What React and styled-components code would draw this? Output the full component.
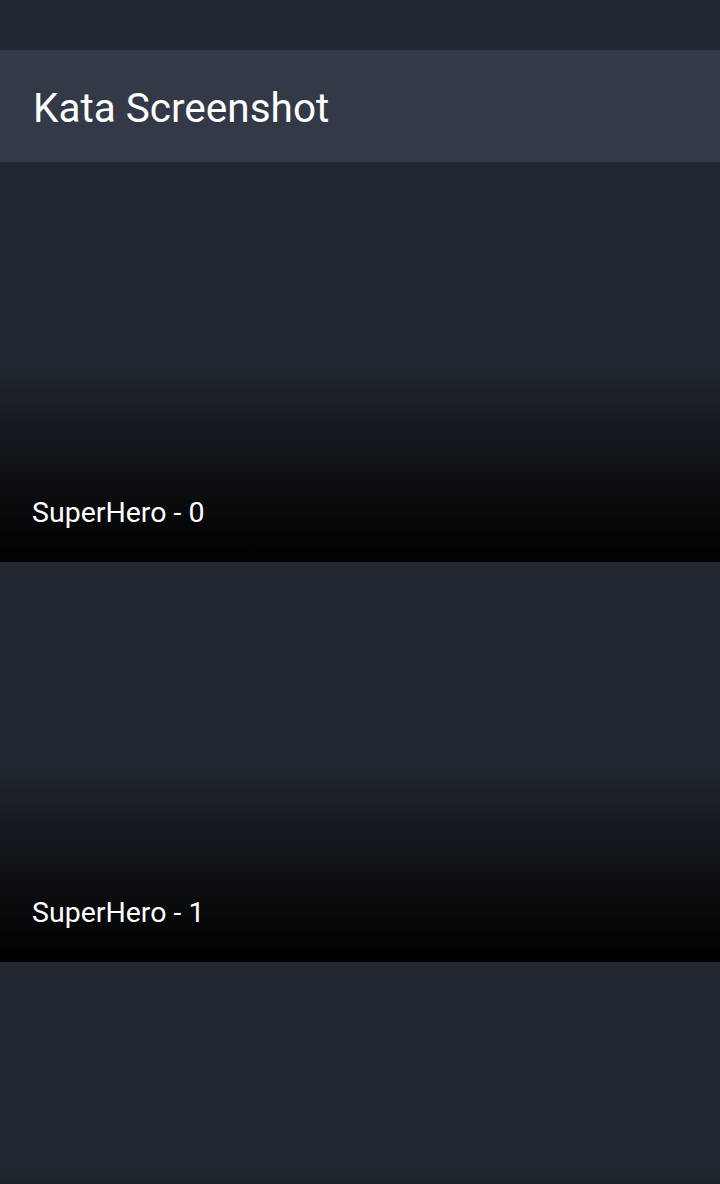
import React from "react";
import styled, { createGlobalStyle } from "styled-components";

const GlobalStyle = createGlobalStyle`
  html, body {
    margin: 0;
    padding: 0;
    background: #222831;
    font-family: Roboto, "Noto Sans", sans-serif;
    overflow: hidden;
  }
`;

const Screen = styled.div`
  width: 720px;
  height: 1184px;
  display: flex;
  flex-direction: column;
  background: #222831;
  overflow: hidden;
`;

const StatusBar = styled.div`
  height: 50px;
  flex-shrink: 0;
  background: #222831;
`;

const Toolbar = styled.div`
  height: 112px;
  flex-shrink: 0;
  display: flex;
  align-items: center;
  padding: 3px 33px 0;
  box-sizing: border-box;
  background: #333946;
`;

const Title = styled.h1`
  margin: 0;
  font-size: 40.5px;
  font-weight: 400;
  color: #ffffff;
`;

const List = styled.div`
  display: flex;
  flex-direction: column;
`;

const HeroRow = styled.div`
  height: 400px;
  flex-shrink: 0;
  display: flex;
  align-items: flex-end;
  padding: 0 32px 33px;
  box-sizing: border-box;
  background: linear-gradient(
      to bottom,
      rgba(0, 0, 0, 0) 50%,
      rgba(0, 0, 0, 0.45) 70%,
      rgba(0, 0, 0, 1) 100%
    ),
    #222831;
`;

const HeroName = styled.span`
  font-size: 28.5px;
  color: #ffffff;
`;

const heroes = ["SuperHero - 0", "SuperHero - 1", "SuperHero - 2"];

const App = () => {
  return (
    <Screen>
      <GlobalStyle />
      <StatusBar />
      <Toolbar>
        <Title>Kata Screenshot</Title>
      </Toolbar>
      <List>
        {heroes.map((name) => (
          <HeroRow key={name}>
            <HeroName>{name}</HeroName>
          </HeroRow>
        ))}
      </List>
    </Screen>
  );
};

export default App;
